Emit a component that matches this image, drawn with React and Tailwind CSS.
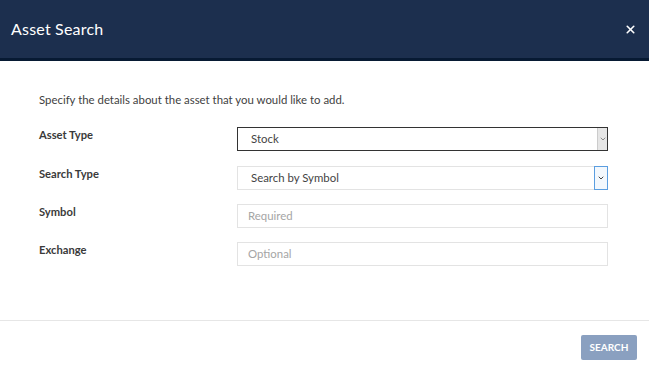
import { ChevronDown, X } from "lucide-react";

function Row({ label, children }) {
  return (
    <div className="flex items-start h-[24px]">
      <div className="w-[198px] pt-px text-[11.2px] font-bold text-[#3a3a3a] leading-[14px]">{label}</div>
      <div className="w-[371px]">{children}</div>
    </div>
  );
}

export default function App() {
  return (
    <div className="w-[649px] h-[374px] bg-white flex flex-col" style={{ fontFamily: "Lato, 'Open Sans', sans-serif" }}>
      <div className="h-[58px] bg-[#1c2f4e] flex items-center justify-between pl-[11px] pr-[12px]">
        <h1 className="text-[16px] text-white tracking-[0.2px]">Asset Search</h1>
        <X className="w-[13px] h-[13px] text-white" strokeWidth={3} />
      </div>
      <div className="h-[3px] bg-[#071a33]" />

      <div className="pl-[39px] pt-[32px] flex-1">
        <p className="text-[11.4px] text-[#3f3f3f] leading-[14px]">
          Specify the details about the asset that you would like to add.
        </p>
        <div className="mt-[20px] flex flex-col gap-[14px]">
          <Row label="Asset Type">
            <div className="h-[24px] border border-[#333] flex items-center">
              <span className="flex-1 pl-[13px] text-[11.4px] text-[#444]">Stock</span>
              <span className="w-[10px] h-full bg-[#e6e6e6] border-l border-[#ccc] flex items-center justify-center">
                <ChevronDown className="w-[8px] h-[8px] text-[#777]" strokeWidth={2.5} />
              </span>
            </div>
          </Row>
          <div className="mt-px">
            <Row label="Search Type">
              <div className="h-[24px] border border-[#e3e3e3] flex items-center">
                <span className="flex-1 pl-[13px] text-[11.4px] text-[#444]">Search by Symbol</span>
                <span className="w-[14px] h-[24px] -my-px -mr-px border border-[#5b9ee0] bg-[#f3f8fd] flex items-center justify-center">
                  <ChevronDown className="w-[8px] h-[8px] text-[#444]" strokeWidth={3} />
                </span>
              </div>
            </Row>
          </div>
          <Row label="Symbol">
            <div className="h-[24px] border border-[#e3e3e3] flex items-center pl-[10px] text-[11.4px] text-[#a5a5a5]">
              Required
            </div>
          </Row>
          <Row label="Exchange">
            <div className="h-[24px] border border-[#e3e3e3] flex items-center pl-[10px] text-[11.4px] text-[#a5a5a5]">
              Optional
            </div>
          </Row>
        </div>
      </div>

      <div className="h-px bg-[#e6e6e6]" />
      <div className="h-[53px] flex items-center justify-end pr-[12px]">
        <button className="w-[56px] h-[25px] rounded-[2px] bg-[#8aa0c0] text-white text-[10px] font-bold">
          SEARCH
        </button>
      </div>
    </div>
  );
}
